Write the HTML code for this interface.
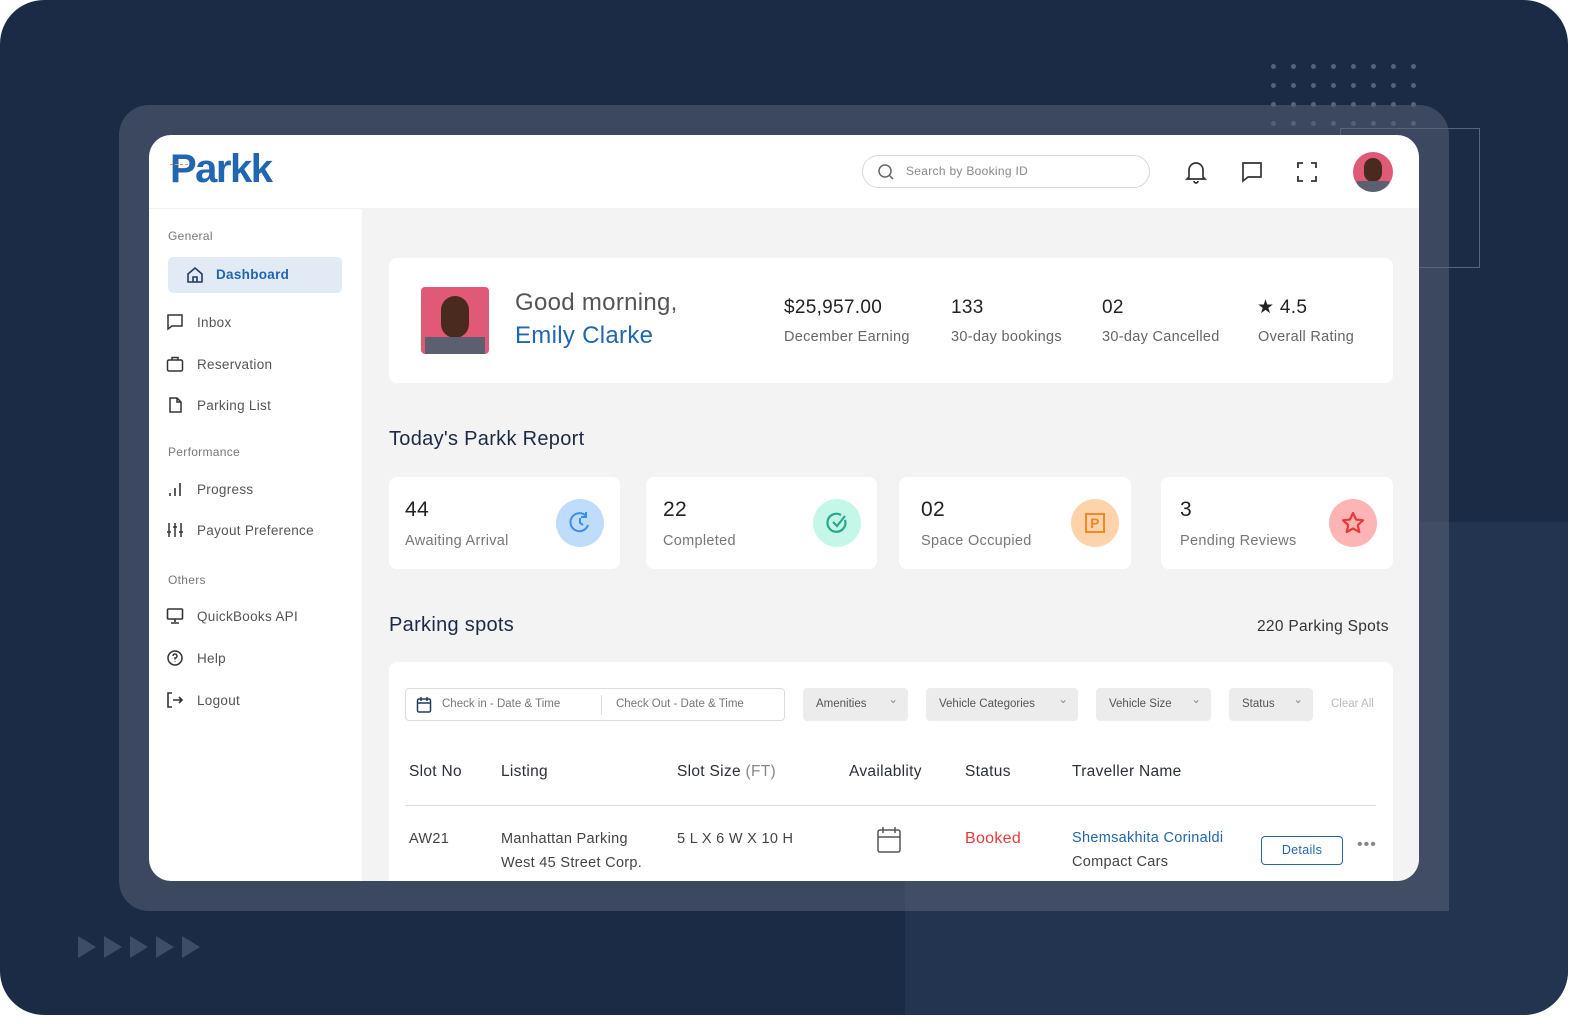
<!DOCTYPE html>
<html><head><meta charset="utf-8"><style>
*{margin:0;padding:0;box-sizing:border-box}
body{width:1582px;height:1024px;overflow:hidden;background:#fff;font-family:"Liberation Sans","DejaVu Sans",sans-serif;position:relative;letter-spacing:0.3px}
.a{position:absolute}
.t{position:absolute;white-space:nowrap}
.nav{font-size:13.5px;color:#555}
.sec{font-size:12px;color:#777}
.card{position:absolute;background:#fff;border-radius:8px}
.dot{position:absolute;width:5px;height:5px;border-radius:50%;background:#56627a}
.chip{position:absolute;top:688px;height:33px;background:#ececec;border-radius:4px;font-size:11.5px;color:#555;line-height:33px;padding-left:13px;letter-spacing:0}
.chip:after{content:"⌄";position:absolute;right:10px;top:-4px;color:#888}
.th{position:absolute;top:763px;font-size:15.5px;color:#2a2f3a}
.td{position:absolute;font-size:14.5px;color:#444;line-height:24px}
svg{position:absolute}
</style></head><body>
<div class="a" style="left:0;top:0;width:1568px;height:1015px;background:#1b2a45;border-radius:44px;overflow:hidden">
  <div class="a" style="left:905px;top:522px;width:700px;height:520px;background:#223450"></div>
</div>
<div class="a" style="left:119px;top:105px;width:1330px;height:806px;background:#3b4860;border-radius:30px"></div>
<div class="a" style="left:905px;top:522px;width:544px;height:389px;background:rgba(255,255,255,0.03);border-bottom-right-radius:30px"></div>
<div class="a" style="left:1340px;top:128px;width:140px;height:140px;border:1.5px solid #58647a"></div>
<div id="dots"></div>
<svg style="left:78px;top:936px" width="125" height="22"><g fill="#3f4c66"><path d="M0 0L18 11L0 22Z"/><path d="M26 0L44 11L26 22Z"/><path d="M52 0L70 11L52 22Z"/><path d="M78 0L96 11L78 22Z"/><path d="M104 0L122 11L104 22Z"/></g></svg>
<div class="a" style="left:149px;top:135px;width:1270px;height:746px;background:#fff;border-radius:22px;overflow:hidden">
  <div class="a" style="left:213px;top:73px;width:1057px;height:673px;background:#f3f3f3"></div>
  <div class="a" style="left:0;top:73px;width:213px;height:673px;border-top:1px solid #f0f0f0"></div>
</div>
<div class="t" style="left:170px;top:147px;font-size:40px;font-weight:bold;color:#2166b0;letter-spacing:-1.5px">Parkk</div>
<div class="a" style="left:170px;top:164px;width:18px;height:3px;border-top:1px dashed #f39a3a"></div>
<div class="a" style="left:862px;top:155px;width:288px;height:33px;border:1px solid #d8d8d8;border-radius:17px"></div>
<svg style="left:877px;top:163px" width="18" height="18" fill="none" stroke="#666" stroke-width="1.5"><circle cx="8" cy="8" r="6"/><path d="M12.5 12.5L16 16"/></svg>
<div class="t" style="left:906px;top:164px;font-size:12px;color:#888">Search by Booking ID</div>
<svg style="left:1184px;top:159px" width="24" height="26" fill="none" stroke="#333" stroke-width="1.7"><path d="M5 18V11a7 7 0 0 1 14 0v7l2 2H3z"/><path d="M10 22a2 2 0 0 0 4 0"/></svg>
<svg style="left:1240px;top:160px" width="24" height="24" fill="none" stroke="#333" stroke-width="1.7"><path d="M3 3h18v14H8l-5 4z"/></svg>
<svg style="left:1295px;top:160px" width="24" height="24" fill="none" stroke="#333" stroke-width="1.8"><path d="M3 8V3h5M16 3h5v5M21 16v5h-5M8 21H3v-5"/></svg>
<div class="a" style="left:1353px;top:152px;width:40px;height:40px;border-radius:50%;background:#e05a78;overflow:hidden"><div class="a" style="left:11px;top:6px;width:18px;height:24px;border-radius:9px;background:#4a2a1e"></div><div class="a" style="left:4px;top:29px;width:32px;height:11px;background:#5b6070"></div></div>
<div class="t sec" style="left:168px;top:229px">General</div>
<div class="a" style="left:168px;top:257px;width:174px;height:36px;background:#e2ebf5;border-radius:5px"></div>
<svg style="left:186px;top:266px" width="18" height="18" fill="none" stroke="#1f3b63" stroke-width="1.6"><path d="M2 8L9 2l7 6v8H2z"/><path d="M7 16v-5h4v5"/></svg>
<div class="t" style="left:216px;top:267px;font-size:13.5px;color:#2166b0;font-weight:bold">Dashboard</div>
<svg style="left:166px;top:313px" width="18" height="18" fill="none" stroke="#333" stroke-width="1.5"><path d="M2 2h14v11H6l-4 3z"/></svg>
<div class="t nav" style="left:197px;top:315px">Inbox</div>
<svg style="left:166px;top:355px" width="18" height="18" fill="none" stroke="#333" stroke-width="1.5"><rect x="1.5" y="5" width="15" height="11" rx="1.5"/><path d="M6 5V2.5h6V5"/></svg>
<div class="t nav" style="left:197px;top:357px">Reservation</div>
<svg style="left:166px;top:396px" width="18" height="18" fill="none" stroke="#333" stroke-width="1.5"><path d="M4 2h7l4 4v10H4z"/><path d="M11 2v4h4"/></svg>
<div class="t nav" style="left:197px;top:398px">Parking List</div>
<div class="t sec" style="left:168px;top:445px">Performance</div>
<svg style="left:166px;top:480px" width="18" height="18" stroke="#333" stroke-width="1.6"><path d="M4 16v-3M9 16V8M14 16V3"/></svg>
<div class="t nav" style="left:197px;top:482px">Progress</div>
<svg style="left:166px;top:521px" width="18" height="18" stroke="#333" stroke-width="1.5"><path d="M3 2v14M9 2v14M15 2v14M1 11h4M7 6h4M13 11h4"/></svg>
<div class="t nav" style="left:197px;top:523px">Payout Preference</div>
<div class="t sec" style="left:168px;top:573px">Others</div>
<svg style="left:166px;top:607px" width="18" height="18" fill="none" stroke="#333" stroke-width="1.6"><rect x="1.5" y="2" width="15" height="10" rx="1"/><path d="M9 12v3M5 16h8"/></svg>
<div class="t nav" style="left:197px;top:609px">QuickBooks API</div>
<svg style="left:166px;top:649px" width="18" height="18" fill="none" stroke="#333" stroke-width="1.5"><circle cx="9" cy="9" r="7"/><path d="M7 7a2 2 0 1 1 2 2v1.5M9 12.5v.5"/></svg>
<div class="t nav" style="left:197px;top:651px">Help</div>
<svg style="left:166px;top:691px" width="18" height="18" fill="none" stroke="#333" stroke-width="1.6"><path d="M6 2H2v14h4M7 9h9M13 6l3 3-3 3"/></svg>
<div class="t nav" style="left:197px;top:693px">Logout</div>
<div class="card" style="left:389px;top:258px;width:1004px;height:125px"></div>
<div class="a" style="left:421px;top:287px;width:68px;height:67px;background:#e05a78;border-radius:4px;overflow:hidden"><div class="a" style="left:20px;top:9px;width:28px;height:42px;border-radius:14px;background:#4a2a1e"></div><div class="a" style="left:4px;top:50px;width:60px;height:17px;background:#5b6070"></div></div>
<div class="t" style="left:515px;top:289px;font-size:24px;color:#555">Good morning,</div>
<div class="t" style="left:515px;top:322px;font-size:24px;color:#2166b0">Emily Clarke</div>
<div class="t" style="left:784px;top:297px;font-size:19px;color:#222">$25,957.00</div>
<div class="t" style="left:784px;top:329px;font-size:14.5px;color:#666">December Earning</div>
<div class="t" style="left:951px;top:297px;font-size:19px;color:#222">133</div>
<div class="t" style="left:951px;top:329px;font-size:14.5px;color:#666">30-day bookings</div>
<div class="t" style="left:1102px;top:297px;font-size:19px;color:#222">02</div>
<div class="t" style="left:1102px;top:329px;font-size:14.5px;color:#666">30-day Cancelled</div>
<div class="t" style="left:1257px;top:296px;font-size:19px;color:#222">★ 4.5</div>
<div class="t" style="left:1258px;top:329px;font-size:14.5px;color:#666">Overall Rating</div>
<div class="t" style="left:389px;top:428px;font-size:20px;color:#1b2a45">Today's Parkk Report</div>
<div class="card" style="left:389px;top:477px;width:231px;height:92px"></div>
<div class="card" style="left:646px;top:477px;width:231px;height:92px"></div>
<div class="card" style="left:899px;top:477px;width:232px;height:92px"></div>
<div class="card" style="left:1161px;top:477px;width:232px;height:92px"></div>
<div class="t" style="left:405px;top:498px;font-size:21px;color:#222">44</div>
<div class="t" style="left:405px;top:533px;font-size:14.5px;color:#777">Awaiting Arrival</div>
<div class="t" style="left:663px;top:498px;font-size:21px;color:#222">22</div>
<div class="t" style="left:663px;top:533px;font-size:14.5px;color:#777">Completed</div>
<div class="t" style="left:921px;top:498px;font-size:21px;color:#222">02</div>
<div class="t" style="left:921px;top:533px;font-size:14.5px;color:#777">Space Occupied</div>
<div class="t" style="left:1180px;top:498px;font-size:21px;color:#222">3</div>
<div class="t" style="left:1180px;top:533px;font-size:14.5px;color:#777">Pending Reviews</div>
<div class="a" style="left:556px;top:499px;width:48px;height:48px;border-radius:50%;background:#bfdcfb"></div>
<svg style="left:568px;top:511px" width="24" height="24" fill="none" stroke="#3b8ef0" stroke-width="2"><path d="M18 5a9 9 0 1 0 2 9"/><path d="M12 7v5l3 2M18 1v5h-5"/></svg>
<div class="a" style="left:813px;top:499px;width:48px;height:48px;border-radius:50%;background:#c5f7e9"></div>
<svg style="left:825px;top:511px" width="24" height="24" fill="none" stroke="#26a98a" stroke-width="2.2"><path d="M20 9a9 9 0 1 1-4-5"/><path d="M8 11l4 4 8-10"/></svg>
<div class="a" style="left:1071px;top:499px;width:48px;height:48px;border-radius:50%;background:#fdd3ac"></div>
<div class="a" style="left:1085px;top:513px;width:20px;height:20px;border:2px solid #f08a24;color:#f08a24;font-weight:bold;font-size:14px;text-align:center;line-height:16px">P</div>
<div class="a" style="left:1329px;top:499px;width:48px;height:48px;border-radius:50%;background:#fdb4b4"></div>
<svg style="left:1341px;top:511px" width="24" height="24" fill="none" stroke="#e83a3a" stroke-width="2.2" stroke-linejoin="round"><path d="M12 2l3 6.5 7 .8-5.2 4.8 1.5 7L12 17.5 5.7 21l1.5-7L2 9.3l7-.8z"/></svg>
<div class="t" style="left:389px;top:614px;font-size:20px;color:#1b2a45">Parking spots</div>
<div class="t" style="left:1257px;top:618px;font-size:15.5px;color:#333">220 Parking Spots</div>
<div class="card" style="left:389px;top:662px;width:1004px;height:230px"></div>
<div class="a" style="left:405px;top:688px;width:380px;height:33px;border:1px solid #ddd;border-radius:4px"></div>
<svg style="left:416px;top:696px" width="16" height="18" fill="none" stroke="#1f3b63" stroke-width="1.5"><rect x="1.5" y="3" width="13" height="13" rx="1.5"/><path d="M1.5 7h13M5 1v4M11 1v4"/></svg>
<div class="t" style="left:442px;top:698px;font-size:11.5px;color:#777;letter-spacing:0">Check in - Date &amp; Time</div>
<div class="a" style="left:601px;top:695px;width:1px;height:20px;background:#ddd"></div>
<div class="t" style="left:616px;top:698px;font-size:11.5px;color:#777;letter-spacing:0">Check Out - Date &amp; Time</div>
<div class="chip" style="left:803px;width:105px">Amenities</div>
<div class="chip" style="left:926px;width:152px">Vehicle Categories</div>
<div class="chip" style="left:1096px;width:115px">Vehicle Size</div>
<div class="chip" style="left:1229px;width:84px">Status</div>
<div class="t" style="left:1331px;top:698px;font-size:11.5px;color:#bbb;letter-spacing:0">Clear All</div>
<div class="th" style="left:409px">Slot No</div>
<div class="th" style="left:501px">Listing</div>
<div class="th" style="left:677px">Slot Size <span style="color:#888">(FT)</span></div>
<div class="th" style="left:849px">Availablity</div>
<div class="th" style="left:965px">Status</div>
<div class="th" style="left:1072px">Traveller Name</div>
<div class="a" style="left:405px;top:805px;width:971px;height:1px;background:#ddd"></div>
<div class="td" style="left:409px;top:827px">AW21</div>
<div class="td" style="left:501px;top:827px">Manhattan Parking<br>West 45 Street Corp.</div>
<div class="td" style="left:677px;top:827px">5 L X 6 W X 10 H</div>
<svg style="left:876px;top:826px" width="26" height="28" fill="none" stroke="#555" stroke-width="1.5"><rect x="2" y="4" width="22" height="22" rx="2"/><path d="M2 11h22M7 1v6M19 1v6"/></svg>
<div class="td" style="left:965px;top:827px;color:#e83a3a;font-size:16px">Booked</div>
<div class="td" style="left:1072px;top:826px"><span style="color:#2166b0">Shemsakhita Corinaldi</span><br>Compact Cars</div>
<div class="a" style="left:1261px;top:836px;width:82px;height:29px;border:1px solid #2166b0;border-radius:4px;color:#2166b0;font-size:12.5px;text-align:center;line-height:27px">Details</div>
<div class="t" style="left:1357px;top:836px;font-size:16px;color:#888;letter-spacing:1px">•••</div>
<div class="a" style="left:149px;top:881px;width:1270px;height:30px;background:#3b4860"></div>
<div class="a" style="left:905px;top:881px;width:514px;height:30px;background:rgba(255,255,255,0.03)"></div>
<div class="a" style="left:1419px;top:800px;width:30px;height:111px;background:#3b4860"></div>
<div class="a" style="left:1419px;top:800px;width:30px;height:111px;background:rgba(255,255,255,0.03)"></div>
<script>
var d=document.getElementById('dots'),h='';
for(var r=0;r<4;r++)for(var c=0;c<8;c++)h+='<div class="dot" style="left:'+(1271+c*20)+'px;top:'+(64+r*19)+'px"></div>';
d.innerHTML=h;
</script>
</body></html>
